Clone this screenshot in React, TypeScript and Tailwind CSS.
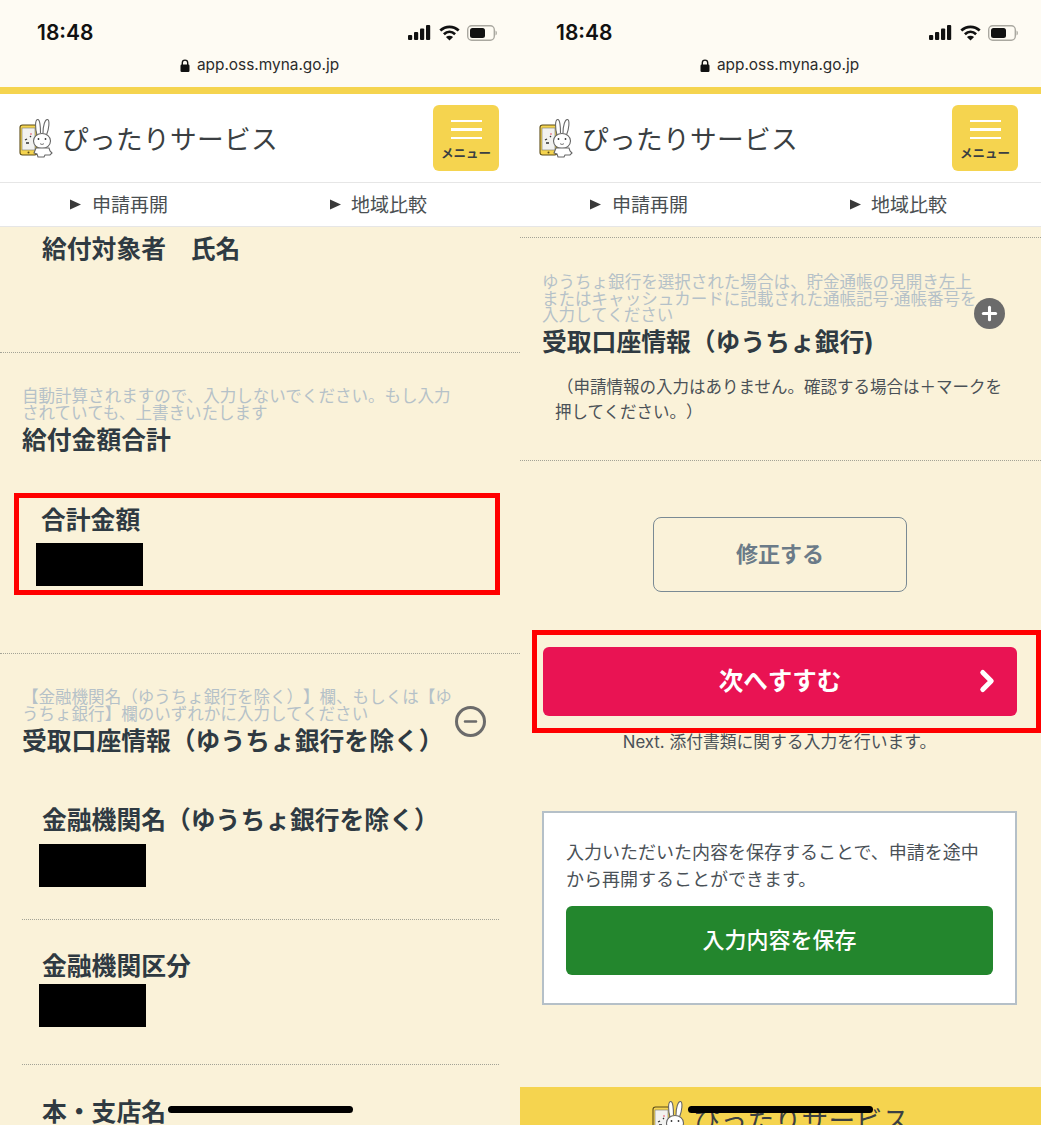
import React from 'react';
import { ChevronRight, Minus, Plus } from 'lucide-react';

const FONT = 'font-["Inter","Noto_Sans_CJK_JP",sans-serif] [text-spacing-trim:space-all]';

const Logo = ({ className }: { className: string }) => (
  <svg viewBox="0 0 36 40" className={className}>
    <rect x="1" y="7" width="17" height="30" rx="2.5" fill="#f5d44f" stroke="#5c4c18" strokeWidth="1.1" />
    <rect x="3" y="10" width="13" height="22" fill="#f2f2f0" stroke="#77776e" strokeWidth="0.6" />
    <circle cx="9.5" cy="34.5" r="1" fill="#5a4a10" />
    <path d="M6 22l2-1M7 25h3M11 19l1-1" stroke="#333" strokeWidth="1.3" fill="none" />
    <circle cx="12" cy="16" r="1" fill="#ec8a9a" />
    <path d="M18 17C16 10 16 2 18.5 1.5C21 1 21.5 9 21.5 15M24 15C24 8 26 1 28.5 1.5C31 2 30 11 27.5 17" fill="#fff" stroke="#666" strokeWidth="1.1" />
    <ellipse cx="23" cy="23" rx="8.5" ry="7.5" fill="#fff" stroke="#666" strokeWidth="1.1" />
    <circle cx="19.5" cy="21" r="0.9" fill="#333" />
    <circle cx="26.5" cy="21" r="0.9" fill="#333" />
    <path d="M21 25.5c1 1.2 3 1.2 4 0" stroke="#555" strokeWidth="0.8" fill="none" />
    <path d="M17 30h13l1 3 2 2-2 2h-5l-1 2h-6l-1-3-3-1z" fill="#fff" stroke="#666" strokeWidth="1.1" />
  </svg>
);

const StatusIcons = () => (
  <div className="flex items-center">
    <svg width="23" height="15" viewBox="0 0 23 15" fill="#111" className="mr-[8px]">
      <rect x="0" y="10" width="4.2" height="5" rx="1" />
      <rect x="6" y="7" width="4.2" height="8" rx="1" />
      <rect x="12" y="3.5" width="4.2" height="11.5" rx="1" />
      <rect x="18" y="0" width="4.2" height="15" rx="1" />
    </svg>
    <svg width="21" height="16" viewBox="0 0 21 16" fill="none" stroke="#111" strokeWidth="2.7" className="mr-[7px]">
      <path d="M1.3 5.6C6.6.6 14.4.6 19.7 5.6" />
      <path d="M4.9 9.2c3.3-3 7.9-3 11.2 0" />
      <path d="M10.5 15.5l-3.6-3.6c2.1-1.6 5.1-1.6 7.2 0z" fill="#111" stroke="none" />
    </svg>
    <svg width="30" height="16" viewBox="0 0 30 16">
      <rect x="0.7" y="0.7" width="26.6" height="14.6" rx="4" fill="none" stroke="#aaa8a0" strokeWidth="1.4" />
      <rect x="3" y="3" width="15" height="10" rx="2.5" fill="#111" />
      <path d="M28.5 5.5c1 .4 1.4 1.4 1.4 2.5s-.4 2.1-1.4 2.5z" fill="#aaa8a0" />
    </svg>
  </div>
);

const LockIcon = () => (
  <svg width="10" height="13" viewBox="0 0 10 13">
    <path d="M2.3 6V3.8a2.7 2.7 0 0 1 5.4 0V6" fill="none" stroke="#111" strokeWidth="1.4" />
    <rect x="0.5" y="5.5" width="9" height="7.5" rx="1.2" fill="#111" />
  </svg>
);

const Triangle = () => (
  <svg width="11" height="11" viewBox="0 0 11 11" fill="#3a3a3a">
    <path d="M0 0.5L11 5.5L0 10.5z" />
  </svg>
);

const PhoneTop = ({ timeLeft, menuRight }: { timeLeft: string; menuRight: string }) => (
  <>
    <div className={`h-[87px] bg-[#fefbf3] relative ${timeLeft}`}>
      <div className="flex items-center justify-between pt-[21px] pr-[23px] h-[44px]">
        <span className="text-[21px] leading-[22px] font-semibold text-[#111]">18:48</span>
        <StatusIcons />
      </div>
      <div className="flex items-center justify-center gap-[7px] mt-[11px] -ml-[38px] text-[15.4px] leading-[20px] text-[#2b2b2b]">
        <LockIcon />
        <span>app.oss.myna.go.jp</span>
      </div>
    </div>
    <div className="h-[7px] bg-[#f5d44f]" />
    <div className={`h-[88px] bg-white flex items-center justify-between pl-[19px] ${menuRight}`}>
      <div className="flex items-center gap-[7px]">
        <Logo className="w-[36px] h-[40px]" />
        <span className="text-[26.7px] leading-[34px] text-[#3b3f42] tracking-[0.3px] pt-[2px]">ぴったりサービス</span>
      </div>
      <div className="w-[66px] h-[66px] -mt-[1px] bg-[#f5d44f] rounded-[6px] flex flex-col items-center pt-[15px]">
        <div className="w-[31px] h-[2.5px] bg-white" />
        <div className="w-[31px] h-[2.5px] bg-white mt-[6px]" />
        <div className="w-[31px] h-[2.5px] bg-white mt-[6px]" />
        <span className="text-[12.5px] leading-[14px] mt-[8px] font-bold text-[#3b3f42]">メニュー</span>
      </div>
    </div>
    <div className="h-[45px] bg-white border-y border-[#e6e6e6] flex items-center text-[19px] text-[#4a4f52]">
      <div className="w-[260px] pl-[70px] flex items-center gap-[11px]">
        <Triangle />
        <span className="pt-[3px]">申請再開</span>
      </div>
      <div className="w-[260px] pl-[70px] flex items-center gap-[10px]">
        <Triangle />
        <span className="pt-[3px]">地域比較</span>
      </div>
    </div>
  </>
);

const Hint = ({ children, className = '' }: { children: React.ReactNode; className?: string }) => (
  <p className={`text-[16.55px] leading-[16.5px] text-[#b5c1c8] ${className}`}>{children}</p>
);

const Heading = ({ children, className = '' }: { children: React.ReactNode; className?: string }) => (
  <h2 className={`text-[24.8px] leading-[30px] font-bold text-[#2f3a42] whitespace-nowrap ${className}`}>{children}</h2>
);

const Dots = ({ className = '' }: { className?: string }) => (
  <div className={`border-t border-dotted border-[#a3a396] ${className}`} />
);

const Redacted = ({ className = '' }: { className?: string }) => (
  <div className={`w-[107px] h-[43px] bg-black ${className}`} />
);

const HomeBar = ({ className = '' }: { className?: string }) => (
  <div className={`absolute w-[185px] h-[7px] rounded-full bg-black ${className}`} />
);

const LeftPhone = () => (
  <div className="relative w-[520px] h-[1125px] overflow-hidden bg-[#faf2d9] flex flex-col *:shrink-0">
    <PhoneTop timeLeft="pl-[37px]" menuRight="pr-[21px]" />
    <Heading className="pl-[42px] mt-[7px]">給付対象者　氏名</Heading>
    <Dots className="mt-[88px]" />
    <div className="pl-[22px] pr-[66px] mt-[35px]">
      <Hint className="w-[432px]">自動計算されますので、入力しないでください。もし入力されていても、上書きいたします</Hint>
      <Heading className="mt-[4px]">給付金額合計</Heading>
    </div>
    <div className="ml-[14px] mt-[38px] w-[486px] h-[102px] border-[5px] border-[#ff0000] pl-[21px] pt-[7px]">
      <Heading className="ml-[1px]">合計金額</Heading>
      <Redacted className="mt-[8px] -ml-[4px]" />
    </div>
    <Dots className="mt-[58px]" />
    <div className="relative pl-[22px] mt-[35px]">
      <Hint className="w-[432px]">【金融機関名（ゆうちょ銀行を除く）】欄、もしくは【ゆうちょ銀行】欄のいずれかに入力してください</Hint>
      <Heading className="mt-[4px]">受取口座情報（ゆうちょ銀行を除く）</Heading>
      <div className="absolute left-[455px] top-[17px] w-[31px] h-[31px] rounded-full border-[3px] border-[#6b6b6b] flex items-center justify-center">
        <Minus size={19} strokeWidth={3} className="text-[#6b6b6b]" />
      </div>
    </div>
    <Heading className="pl-[42px] mt-[49px]">金融機関名（ゆうちょ銀行を除く）</Heading>
    <Redacted className="ml-[39px] mt-[9px]" />
    <Dots className="ml-[22px] mr-[21px] mt-[32px]" />
    <Heading className="pl-[42px] mt-[31px]">金融機関区分</Heading>
    <Redacted className="ml-[39px] mt-[3px]" />
    <Dots className="ml-[22px] mr-[21px] mt-[37px]" />
    <Heading className="pl-[42px] mt-[32px]">本・支店名</Heading>
    <HomeBar className="left-[168px] top-[1106px]" />
  </div>
);

const RightPhone = () => (
  <div className="relative w-[521px] h-[1125px] overflow-hidden bg-[#faf2d9] flex flex-col *:shrink-0">
    <PhoneTop timeLeft="pl-[36px]" menuRight="pr-[23px]" />
    <Dots className="mt-[10px]" />
    <div className="relative pl-[22px] mt-[36px]">
      <Hint className="w-[438px]">ゆうちょ銀行を選択された場合は、貯金通帳の見開き左上またはキャッシュカードに記載された通帳記号·通帳番号を入力してください</Hint>
      <Heading className="mt-[3px]">受取口座情報（ゆうちょ銀行)</Heading>
      <div className="absolute left-[454px] top-[24px] w-[31px] h-[31px] rounded-full bg-[#6b6b6b] flex items-center justify-center">
        <Plus size={21} strokeWidth={3.5} className="text-white" />
      </div>
    </div>
    <p className="pl-[35px] pr-[30px] mt-[18px] text-[16.5px] leading-[25px] text-[#4a5157] indent-[2px]">（申請情報の入力はありません。確認する場合は＋マークを押してください。）</p>
    <Dots className="mt-[35px]" />
    <button className="self-start ml-[133px] mt-[56px] w-[254px] h-[75px] rounded-[8px] border-[1.5px] border-[#7a8a94] text-[22px] font-bold text-[#6b7b88]">修正する</button>
    <div className="ml-[12px] mt-[38px] w-[509px] h-[103px] border-[5px] border-[#ff0000] pl-[6px] pt-[12px]">
      <div className="relative w-[474px] h-[69px] rounded-[6px] bg-[#e91353] flex items-center justify-center text-[24.5px] font-bold text-white">
        <span>次へすすむ</span>
        <ChevronRight size={34} strokeWidth={3.5} className="absolute right-[13px]" />
      </div>
    </div>
    <p className="text-[16.8px] leading-[20px] text-center text-[#4a5157] -mt-[1px] -ml-[2px]">Next. 添付書類に関する入力を行います。</p>
    <div className="ml-[22px] mt-[59px] w-[475px] h-[194px] bg-white border-2 border-[#b5c0c8] px-[22px] pt-[26px]">
      <p className="text-[18px] leading-[27px] text-[#4a5157]">入力いただいた内容を保存することで、申請を途中から再開することができます。</p>
      <div className="mt-[13px] w-[427px] h-[69px] rounded-[6px] bg-[#23862d] flex items-center justify-center text-[22px] font-medium text-white">入力内容を保存</div>
    </div>
    <div className="mt-[82px] h-[60px] bg-[#f5d44f] flex items-start justify-center gap-[6px] pt-[13px]">
      <Logo className="w-[36px] h-[40px]" />
      <span className="text-[26.7px] leading-[34px] text-[#3b3f42] tracking-[0.3px] mt-[3px] whitespace-nowrap">ぴったりサービス</span>
    </div>
    <HomeBar className="left-[168px] top-[1106px]" />
  </div>
);

export default function App() {
  return (
    <div className={`flex w-[1041px] h-[1125px] overflow-hidden ${FONT}`}>
      <LeftPhone />
      <RightPhone />
    </div>
  );
}
